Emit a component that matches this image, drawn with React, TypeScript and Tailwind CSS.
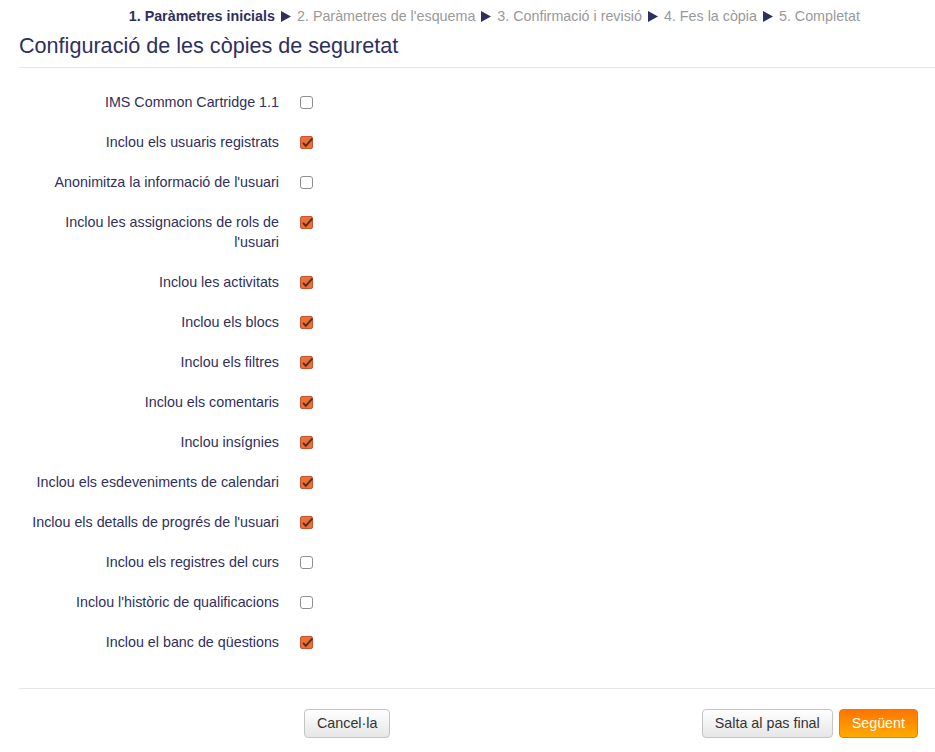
import React from "react";

const options: { label: string; checked: boolean }[] = [
  { label: "IMS Common Cartridge 1.1", checked: false },
  { label: "Inclou els usuaris registrats", checked: true },
  { label: "Anonimitza la informació de l'usuari", checked: false },
  { label: "Inclou les assignacions de rols de l'usuari", checked: true },
  { label: "Inclou les activitats", checked: true },
  { label: "Inclou els blocs", checked: true },
  { label: "Inclou els filtres", checked: true },
  { label: "Inclou els comentaris", checked: true },
  { label: "Inclou insígnies", checked: true },
  { label: "Inclou els esdeveniments de calendari", checked: true },
  { label: "Inclou els detalls de progrés de l'usuari", checked: true },
  { label: "Inclou els registres del curs", checked: false },
  { label: "Inclou l'històric de qualificacions", checked: false },
  { label: "Inclou el banc de qüestions", checked: true },
];

const steps = [
  "2. Paràmetres de l'esquema",
  "3. Confirmació i revisió",
  "4. Fes la còpia",
  "5. Completat",
];

function Box({ checked }: { checked: boolean }) {
  if (!checked) {
    return <span className="block h-[13px] w-[13px] rounded-[3px] border border-[#8f8f8f] bg-white" />;
  }
  return (
    <span className="relative block h-[13px] w-[13px] rounded-[2px] border border-[#c9562a] bg-[#e8703a]">
      <svg viewBox="0 0 13 13" className="absolute -left-px -top-px h-[14px] w-[14px] overflow-visible">
        <path d="M2.8 6.4 L5.4 9.2 L11.4 2.4" fill="none" stroke="#5e2a1a" strokeWidth="1.8" />
      </svg>
    </span>
  );
}

function Arrow() {
  return (
    <svg viewBox="0 0 10 11" className="mx-[6px] inline-block h-[11px] w-[10px] align-[-1px]">
      <path d="M0 0 L10 5.5 L0 11 Z" fill="#2f2f5e" />
    </svg>
  );
}

export default function App() {
  return (
    <div className="min-h-[752px] bg-white text-[14.3px] text-[#2f2f5e]" style={{ fontFamily: '"Liberation Sans", Arial, sans-serif' }}>
      <div className="flex justify-end pr-[75px] pt-[6px] text-[14.3px] leading-[20px]">
        <span className="font-bold text-[#2f2f5e]">1. Paràmetres inicials</span>
        {steps.map((s) => (
          <span key={s} className="text-[#999]">
            <Arrow />
            {s}
          </span>
        ))}
      </div>

      <div className="ml-[19px]">
        <h2 className="border-b border-[#e5e5e5] pb-[6px] pt-[5px] text-[21.6px] leading-[30px]">
          Configuració de les còpies de seguretat
        </h2>

        <div className="pt-[24px]">
          {options.map((o) => (
            <div key={o.label} className="mb-[20px] flex leading-[20px]">
              <div className="ml-[8px] w-[252px] text-right">{o.label}</div>
              <div className="ml-[21px] pt-[4px]">
                <Box checked={o.checked} />
              </div>
            </div>
          ))}
        </div>

        <div className="mt-[36px] flex items-center border-t border-[#e5e5e5] pt-[20px]">
          <button className="ml-[285px] h-[29px] rounded-[4px] border border-[#c4c4c4] bg-gradient-to-b from-white to-[#e6e6e6] px-[12px] text-[14.3px] text-[#333]">
            Cancel·la
          </button>
          <div className="ml-auto mr-[17px] flex gap-[6px]">
            <button className="h-[29px] rounded-[4px] border border-[#c4c4c4] bg-gradient-to-b from-white to-[#e6e6e6] px-[12px] text-[14.3px] text-[#333]">
              Salta al pas final
            </button>
            <button className="h-[29px] rounded-[4px] border border-[#e67e00] bg-gradient-to-b from-[#ff7400] to-[#ffab00] px-[12px] text-[14.3px] text-white">
              Següent
            </button>
          </div>
        </div>
      </div>
    </div>
  );
}
